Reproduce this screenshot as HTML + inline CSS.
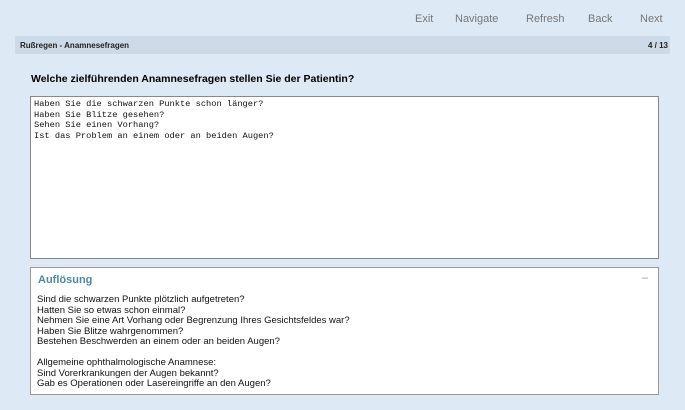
<!DOCTYPE html>
<html><head><style>
body{margin:0;width:685px;height:410px;background:#dee9f6;font-family:"Liberation Sans",sans-serif;position:relative;overflow:hidden}
.nav{position:absolute;top:13px;font-size:11px;color:#777}
.bar{position:absolute;left:15px;top:36px;width:655px;height:18px;background:#cddbe8;font-size:8px;font-weight:bold;color:#222}
h1{position:absolute;left:31px;top:73px;margin:0;font-size:10.5px;font-weight:bold;color:#000}
.ta{position:absolute;left:30px;top:96px;width:624px;height:159px;background:#fff;border:1px solid #888;font-family:"Liberation Mono",monospace;font-size:8.7px;line-height:10.5px;padding:2px 0 0 3px;box-sizing:content-box;color:#111;white-space:pre}
.box{position:absolute;left:30px;top:267px;width:627px;height:126px;background:#fff;border:1px solid #999}
.box .t{position:absolute;left:7px;top:6px;font-size:11px;font-weight:bold;color:#4c88a8}
.box .m{position:absolute;right:10px;top:4px;color:#999;font-size:11px}
.box .c{position:absolute;left:6px;top:27px;font-size:9.5px;line-height:10.5px;color:#111}
</style></head><body>
<div class="nav" style="left:415px">Exit</div>
<div class="nav" style="left:455px">Navigate</div>
<div class="nav" style="left:526px">Refresh</div>
<div class="nav" style="left:588px">Back</div>
<div class="nav" style="left:640px">Next</div>
<div class="bar"><span style="position:absolute;left:5px;top:5px">Rußregen - Anamnesefragen</span><span style="position:absolute;right:2px;top:5px">4 / 13</span></div>
<h1>Welche zielführenden Anamnesefragen stellen Sie der Patientin?</h1>
<div class="ta">Haben Sie die schwarzen Punkte schon länger?
Haben Sie Blitze gesehen?
Sehen Sie einen Vorhang?
Ist das Problem an einem oder an beiden Augen?</div>
<div class="box"><div class="t">Auflösung</div><div class="m">–</div>
<div class="c">Sind die schwarzen Punkte plötzlich aufgetreten?<br>Hatten Sie so etwas schon einmal?<br>Nehmen Sie eine Art Vorhang oder Begrenzung Ihres Gesichtsfeldes war?<br>Haben Sie Blitze wahrgenommen?<br>Bestehen Beschwerden an einem oder an beiden Augen?<br><br>Allgemeine ophthalmologische Anamnese:<br>Sind Vorerkrankungen der Augen bekannt?<br>Gab es Operationen oder Lasereingriffe an den Augen?</div></div>
</body></html>
